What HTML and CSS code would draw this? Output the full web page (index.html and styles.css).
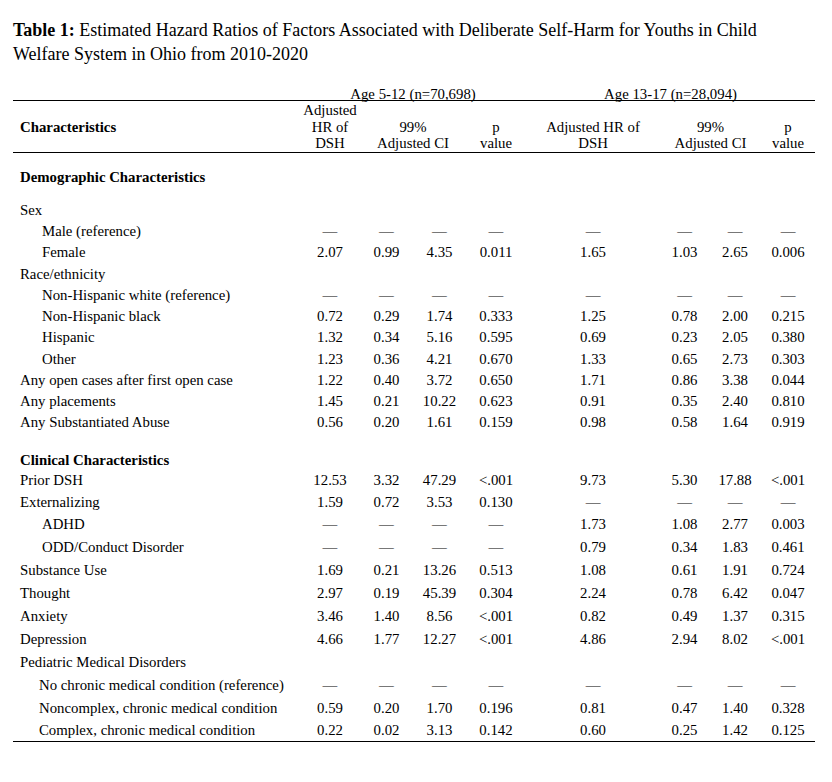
FILE: index.html
```html
<!DOCTYPE html>
<html lang="en">
<head>
<meta charset="utf-8">
<title>Table 1</title>
<link rel="stylesheet" href="styles.css">
</head>
<body>
<div class="page">
  <p class="title"><b class="lead">Table 1: </b>Estimated Hazard Ratios of Factors Associated with Deliberate Self-Harm for Youths in Child Welfare System in Ohio from 2010-2020</p>
  <table class="tbl">
    <colgroup>
      <col class="c-lab"><col class="c-hr1"><col class="c-lo1"><col class="c-hi1"><col class="c-p1">
      <col class="c-hr2"><col class="c-lo2"><col class="c-hi2"><col class="c-p2">
    </colgroup>
    <thead>
      <tr class="r-group">
        <th></th>
        <th colspan="4">Age 5-12 (n=70,698)</th>
        <th colspan="4">Age 13-17 (n=28,094)</th>
      </tr>
      <tr class="r-head">
        <th class="h-char">Characteristics</th>
        <th>Adjusted<br>HR of<br>DSH</th>
        <th colspan="2">99%<br>Adjusted CI</th>
        <th>p<br>value</th>
        <th>Adjusted HR of<br>DSH</th>
        <th colspan="2">99%<br>Adjusted CI</th>
        <th>p<br>value</th>
      </tr>
    </thead>
    <tbody>
      <tr class="r-sec1"><td class="lab sec" colspan="9">Demographic Characteristics</td></tr>
      <tr class="r21"><td class="lab">Sex</td><td></td><td></td><td></td><td></td><td></td><td></td><td></td><td></td></tr>
      <tr class="r21"><td class="lab ind">Male (reference)</td><td>—</td><td>—</td><td>—</td><td>—</td><td>—</td><td>—</td><td>—</td><td>—</td></tr>
      <tr class="r21"><td class="lab ind">Female</td><td>2.07</td><td>0.99</td><td>4.35</td><td>0.011</td><td>1.65</td><td>1.03</td><td>2.65</td><td>0.006</td></tr>
      <tr class="r22"><td class="lab">Race/ethnicity</td><td></td><td></td><td></td><td></td><td></td><td></td><td></td><td></td></tr>
      <tr class="r21"><td class="lab ind">Non-Hispanic white (reference)</td><td>—</td><td>—</td><td>—</td><td>—</td><td>—</td><td>—</td><td>—</td><td>—</td></tr>
      <tr class="r21"><td class="lab ind">Non-Hispanic black</td><td>0.72</td><td>0.29</td><td>1.74</td><td>0.333</td><td>1.25</td><td>0.78</td><td>2.00</td><td>0.215</td></tr>
      <tr class="r21"><td class="lab ind">Hispanic</td><td>1.32</td><td>0.34</td><td>5.16</td><td>0.595</td><td>0.69</td><td>0.23</td><td>2.05</td><td>0.380</td></tr>
      <tr class="r22"><td class="lab ind">Other</td><td>1.23</td><td>0.36</td><td>4.21</td><td>0.670</td><td>1.33</td><td>0.65</td><td>2.73</td><td>0.303</td></tr>
      <tr class="r21"><td class="lab">Any open cases after first open case</td><td>1.22</td><td>0.40</td><td>3.72</td><td>0.650</td><td>1.71</td><td>0.86</td><td>3.38</td><td>0.044</td></tr>
      <tr class="r21"><td class="lab">Any placements</td><td>1.45</td><td>0.21</td><td>10.22</td><td>0.623</td><td>0.91</td><td>0.35</td><td>2.40</td><td>0.810</td></tr>
      <tr class="r21"><td class="lab">Any Substantiated Abuse</td><td>0.56</td><td>0.20</td><td>1.61</td><td>0.159</td><td>0.98</td><td>0.58</td><td>1.64</td><td>0.919</td></tr>
      <tr class="r-sec2"><td class="lab sec" colspan="9">Clinical Characteristics</td></tr>
      <tr class="r21"><td class="lab">Prior DSH</td><td>12.53</td><td>3.32</td><td>47.29</td><td>&lt;.001</td><td>9.73</td><td>5.30</td><td>17.88</td><td>&lt;.001</td></tr>
      <tr class="r22"><td class="lab">Externalizing</td><td>1.59</td><td>0.72</td><td>3.53</td><td>0.130</td><td>—</td><td>—</td><td>—</td><td>—</td></tr>
      <tr class="r23"><td class="lab ind">ADHD</td><td>—</td><td>—</td><td>—</td><td>—</td><td>1.73</td><td>1.08</td><td>2.77</td><td>0.003</td></tr>
      <tr class="r23"><td class="lab ind">ODD/Conduct Disorder</td><td>—</td><td>—</td><td>—</td><td>—</td><td>0.79</td><td>0.34</td><td>1.83</td><td>0.461</td></tr>
      <tr class="r23"><td class="lab">Substance Use</td><td>1.69</td><td>0.21</td><td>13.26</td><td>0.513</td><td>1.08</td><td>0.61</td><td>1.91</td><td>0.724</td></tr>
      <tr class="r23"><td class="lab">Thought</td><td>2.97</td><td>0.19</td><td>45.39</td><td>0.304</td><td>2.24</td><td>0.78</td><td>6.42</td><td>0.047</td></tr>
      <tr class="r23"><td class="lab">Anxiety</td><td>3.46</td><td>1.40</td><td>8.56</td><td>&lt;.001</td><td>0.82</td><td>0.49</td><td>1.37</td><td>0.315</td></tr>
      <tr class="r23"><td class="lab">Depression</td><td>4.66</td><td>1.77</td><td>12.27</td><td>&lt;.001</td><td>4.86</td><td>2.94</td><td>8.02</td><td>&lt;.001</td></tr>
      <tr class="r23"><td class="lab">Pediatric Medical Disorders</td><td></td><td></td><td></td><td></td><td></td><td></td><td></td><td></td></tr>
      <tr class="r23"><td class="lab ind2">No chronic medical condition (reference)</td><td>—</td><td>—</td><td>—</td><td>—</td><td>—</td><td>—</td><td>—</td><td>—</td></tr>
      <tr class="r23"><td class="lab ind2">Noncomplex, chronic medical condition</td><td>0.59</td><td>0.20</td><td>1.70</td><td>0.196</td><td>0.81</td><td>0.47</td><td>1.40</td><td>0.328</td></tr>
      <tr class="r22 last"><td class="lab ind2">Complex, chronic medical condition</td><td>0.22</td><td>0.02</td><td>3.13</td><td>0.142</td><td>0.60</td><td>0.25</td><td>1.42</td><td>0.125</td></tr>
    </tbody>
  </table>
</div>
</body>
</html>
```

FILE: styles.css
```css
html, body {
  margin: 0;
  padding: 0;
  background: #fff;
}

.page {
  padding: 19px 13px 0 13px;
  font-family: "Liberation Serif", "Times New Roman", serif;
  color: #000;
}

.title {
  margin: 0;
  font-size: 18px;
  line-height: 23.5px;
  width: 780px;
}

.title .lead {
  font-weight: bold;
}

.tbl {
  margin-top: 14px;
  width: 802px;
  table-layout: fixed;
  border-collapse: collapse;
  font-size: 14.8px;
}

.c-lab { width: 287px; }
.c-hr1 { width: 60px; }
.c-lo1 { width: 53px; }
.c-hi1 { width: 53px; }
.c-p1 { width: 60px; }
.c-hr2 { width: 134px; }
.c-lo2 { width: 49px; }
.c-hi2 { width: 52px; }
.c-p2 { width: 54px; }

.tbl th,
.tbl td {
  padding: 0;
  font-weight: normal;
  text-align: center;
  white-space: nowrap;
  line-height: 17px;
  vertical-align: middle;
}

.tbl tbody td {
  padding-top: 2px;
}

.r-group {
  height: 20px;
}

.r-group th {
  vertical-align: bottom;
  line-height: 12px;
}

.r-head {
  height: 52px;
  border-top: 1px solid #000;
  border-bottom: 1px solid #000;
}

.r-head th {
  vertical-align: bottom;
  line-height: 16.5px;
}

.r-head th.h-char {
  text-align: left;
  padding-left: 7px;
  font-weight: bold;
  vertical-align: middle;
  padding-top: 2px;
}

.tbl td.lab {
  text-align: left;
  padding-left: 7px;
}

.tbl td.ind { padding-left: 29px; }
.tbl td.ind2 { padding-left: 26px; }

.tbl td.sec {
  font-weight: bold;
}

.r-sec1 { height: 47px; }
.tbl .r-sec1 td { padding-top: 4px; }

.r-sec2 { height: 37px; }
.tbl .r-sec2 td {
  vertical-align: bottom;
  padding-top: 0;
  padding-bottom: 0;
}

.r21 { height: 21px; }
.r22 { height: 22px; }
.r23 { height: 23px; }

.last {
  border-bottom: 1px solid #000;
}
```
